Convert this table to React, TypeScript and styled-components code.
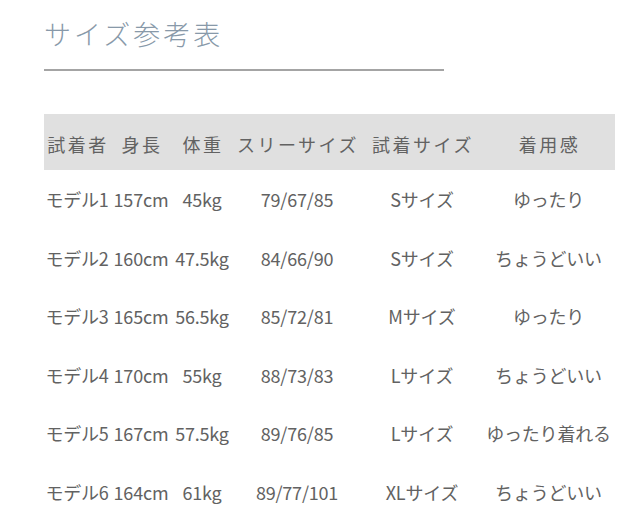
import styled, { createGlobalStyle } from "styled-components";

const GlobalStyle = createGlobalStyle`
	body {
		margin: 0;
		background: #fff;
		font-family: "Noto Sans CJK JP", sans-serif;
	}
`;

const Page = styled.div`
	padding: 18px 25px 0 44px;
`;

const Title = styled.h2`
	margin: 0;
	font-weight: 300;
	font-size: 27px;
	line-height: 32px;
	letter-spacing: 3px;
	color: #8899a9;
`;

const Divider = styled.div`
	width: 400px;
	height: 2px;
	margin-top: 19px;
	background: #a4a4a4;
`;

const Table = styled.table`
	margin-top: 43px;
	width: 571px;
	border-collapse: collapse;
	table-layout: fixed;
	color: #626262;
	font-size: 18px;
`;

const HeadRow = styled.tr`
	height: 56px;
	background: #e0e0e0;
`;

const HeadCell = styled.th`
	padding: 4px 0 0 2px;
	font-weight: 400;
	letter-spacing: 2.5px;
	text-align: center;
	white-space: nowrap;
`;

const Row = styled.tr`
	height: 58.5px;
`;

const Cell = styled.td`
	padding: 0;
	text-align: center;
	white-space: nowrap;
	letter-spacing: -0.2px;
`;

const widths = [66, 62, 60, 130, 120, 133];
const headers = ["試着者", "身長", "体重", "スリーサイズ", "試着サイズ", "着用感"];

const rows = [
	["モデル1", "157cm", "45kg", "79/67/85", "Sサイズ", "ゆったり"],
	["モデル2", "160cm", "47.5kg", "84/66/90", "Sサイズ", "ちょうどいい"],
	["モデル3", "165cm", "56.5kg", "85/72/81", "Mサイズ", "ゆったり"],
	["モデル4", "170cm", "55kg", "88/73/83", "Lサイズ", "ちょうどいい"],
	["モデル5", "167cm", "57.5kg", "89/76/85", "Lサイズ", "ゆったり着れる"],
	["モデル6", "164cm", "61kg", "89/77/101", "XLサイズ", "ちょうどいい"],
];

const App = () => {
	return (
		<Page>
			<GlobalStyle />
			<Title>サイズ参考表</Title>
			<Divider />
			<Table>
				<colgroup>
					{widths.map((w, i) => (
						<col key={i} style={{ width: w }} />
					))}
				</colgroup>
				<thead>
					<HeadRow>
						{headers.map((h) => (
							<HeadCell key={h}>{h}</HeadCell>
						))}
					</HeadRow>
				</thead>
				<tbody>
					{rows.map((row) => (
						<Row key={row[0]}>
							{row.map((value, i) => (
								<Cell key={i}>{value}</Cell>
							))}
						</Row>
					))}
				</tbody>
			</Table>
		</Page>
	);
};

export default App;
